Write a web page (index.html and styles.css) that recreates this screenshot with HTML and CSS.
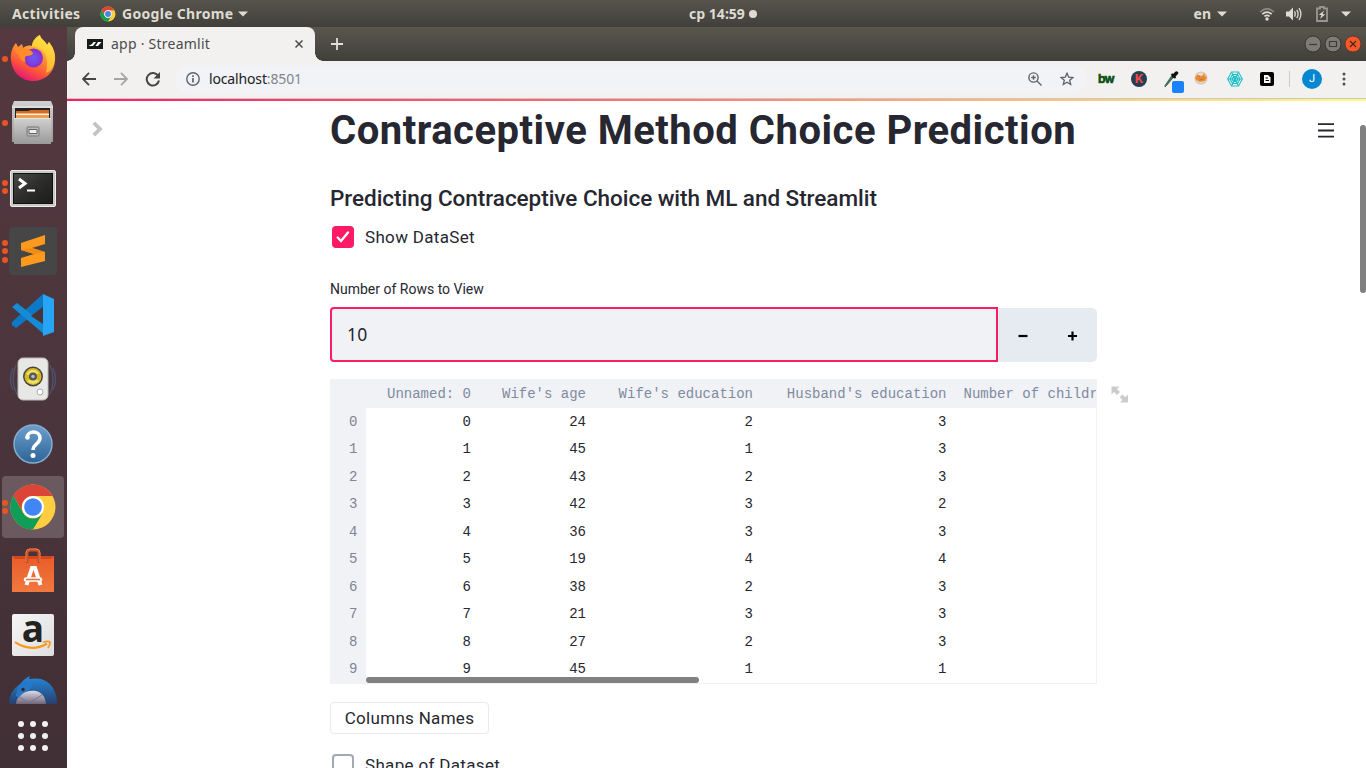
FILE: index.html
```html
<!DOCTYPE html>
<html lang="en">
<head>
<meta charset="utf-8">
<title>app · Streamlit</title>
<link rel="stylesheet" href="styles.css">
</head>
<body>
<svg width="0" height="0" class="defs">
  <defs>
    <linearGradient id="fox" x1="0.8" y1="0" x2="0.3" y2="1"><stop offset="0" stop-color="#fff44f"/><stop offset=".35" stop-color="#ffa436"/><stop offset=".7" stop-color="#ff5a36"/><stop offset="1" stop-color="#e3127a"/></linearGradient>
    <radialGradient id="globe"><stop offset="0" stop-color="#6a5cf5"/><stop offset="1" stop-color="#8a2fc9"/></radialGradient>
    <linearGradient id="metal" x1="0" y1="0" x2="0" y2="1"><stop offset="0" stop-color="#d0d0d0"/><stop offset="1" stop-color="#9a9a9a"/></linearGradient>
    <linearGradient id="term" x1="0" y1="0" x2="1" y2="1"><stop offset="0" stop-color="#4a4a48"/><stop offset=".5" stop-color="#2c2c2b"/><stop offset="1" stop-color="#1c1c1c"/></linearGradient>
    <linearGradient id="blue" x1="0" y1="0" x2="0" y2="1"><stop offset="0" stop-color="#6c9fce"/><stop offset="1" stop-color="#2d6496"/></linearGradient>
    <linearGradient id="bag" x1="0" y1="0" x2="0" y2="1"><stop offset="0" stop-color="#e95c2a"/><stop offset="1" stop-color="#f0783e"/></linearGradient>
    <linearGradient id="bird" x1="0" y1="0" x2="0" y2="1"><stop offset="0" stop-color="#2489dc"/><stop offset="1" stop-color="#27406f"/></linearGradient>
    <linearGradient id="paper" x1="0" y1="0" x2="0" y2="1"><stop offset="0" stop-color="#dcdcea"/><stop offset="1" stop-color="#6f6577"/></linearGradient>
    <symbol id="chrome" viewBox="0 0 48 48">
      <circle cx="24" cy="24" r="22.500" fill="#ffcd40"/>
      <path d="M4.500 12.700A22.500 22.500 0 0 1 43.500 13H24A11.5 11.5 0 0 0 14 29.8Z" fill="#db4437"/>
      <path d="M4.500 12.700A22.500 22.500 0 0 0 24 46.500L34 29.8A11.5 11.5 0 0 1 14 29.8Z" fill="#0f9d58"/>
      <circle cx="24" cy="24" r="11" fill="#fff"/><circle cx="24" cy="24" r="8.8" fill="#4285f4"/>
    </symbol>
  </defs>
</svg>

<header class="topbar">
  <span class="top-activities">Activities</span>
  <svg class="top-chrome" width="16" height="16"><use href="#chrome"/></svg>
  <span class="top-app">Google Chrome</span>
  <svg width="10" height="6" viewBox="0 0 10 6"><path d="M0 .5h10L5 5.5z" fill="#dfdbd2"/></svg>
  <div class="clock"><span>ср 14:59</span><i></i></div>
  <div class="tray">
    <span>en</span>
    <svg class="caret" width="10" height="6" viewBox="0 0 10 6"><path d="M0 .5h10L5 5.5z" fill="#dfdbd2"/></svg>
    <svg class="wifi" width="16" height="14" viewBox="0 0 16 14" fill="none" stroke-width="1.7"><path d="M1.200 5Q8-1.500 14.800 5" stroke="#8a8880"/><path d="M3.300 7.200Q8 2.900 12.700 7.200" stroke="#dfdbd2"/><path d="M5.400 9.400Q8 7.200 10.600 9.400" stroke="#dfdbd2"/><circle cx="8" cy="12" r="1.700" fill="#dfdbd2"/></svg>
    <svg class="volume" width="16" height="14" viewBox="0 0 16 14"><path d="M0 4.500h3L7 .5v13l-4-4H0z" fill="#dfdbd2"/><path d="M8.500 4.400q1.500 2.600 0 5.200M10.800 2.800q2.600 4.200 0 8.400M13 1.200q3.800 5.800 0 11.600" fill="none" stroke="#dfdbd2" stroke-width="1.300"/></svg>
    <svg class="battery" width="12" height="16" viewBox="0 0 12 16"><path d="M1 2.500h3V1h4v1.500h3V15H1z" fill="none" stroke="#99968f" stroke-width="1.800"/><path d="M8 4.500 2.800 9h2.700L4 13l5.200-4.800H6.500z" fill="#dfdbd2"/></svg>
    <svg width="10" height="6" viewBox="0 0 10 6"><path d="M0 .5h10L5 5.500z" fill="#dfdbd2"/></svg>
  </div>
</header>

<div class="desktop">
  <nav class="dock">
    <div class="app"><div class="dots"><i></i></div>
      <svg width="48" height="48" viewBox="0 0 48 48"><path d="M2 25C1 18 4 11 7 8l2 4 4-3 1 4c2-2 6-3 9-2C23 6 27 2 31 0c1 5 5 5 7 10l2-3c4 5 7 11 6 19-1 12-10 20-22 20S3 37 2 25Z" fill="url(#fox)"/><path d="M31 0c1 5 5 5 7 10l2-3c5 7 7 14 5 22-2 6-5 8-8 9 3-14 0-22-8-25-2-1-4-2-6-1 0-6 4-10 8-12Z" fill="#ffdf3b" opacity=".65"/><circle cx="24.500" cy="23" r="9.500" fill="url(#globe)"/><path d="M5 12l4 1 4-2 2 3c4-1 7 1 9 4 0 2-3 3-7 3-2 2-1 4 0 6-5-1-7-4-7-7-4-2-5-5-5-8Z" fill="#ff8b2a"/></svg>
    </div>
    <div class="app"><div class="dots"><i></i></div>
      <svg width="48" height="48" viewBox="0 0 48 48"><path d="M5 2h37l2 5v36H3V7z" fill="url(#metal)"/><path d="M3 7h41v2H3z" fill="#dedede"/><path d="M6 9h35v10H6z" fill="#222"/><path d="M7 12h12l3-1h18v9H7z" fill="#d66a25"/><path d="M7 14.500h33v1.500H7z" fill="#fff3dd"/><path d="M7 16h33v4H7z" fill="#eda04a"/><path d="M5 19h37v26H5z" fill="url(#metal)"/><path d="M5 19h37v1H5z" fill="#e5e5e5"/><rect x="18" y="28" width="12" height="9" rx="1.500" fill="#bbb" stroke="#8c8c8c" stroke-width="1.500"/><path d="M20 30.500h8v4h-8z" fill="#eee" stroke="#666" stroke-width="1"/></svg>
    </div>
    <div class="app"><div class="dots"><i></i><i></i></div>
      <svg width="48" height="48" viewBox="0 0 48 48"><rect x="1.500" y="7.500" width="45" height="36" rx="1.500" fill="#c9cac6" stroke="#ecece9" stroke-width="1"/><rect x="4.500" y="10.500" width="39" height="30" fill="url(#term)" stroke="#111" stroke-width="1"/><path d="M10 16l6 4.500-6 4.500" fill="none" stroke="#fff" stroke-width="3"/><path d="M18 27.500h8" stroke="#fff" stroke-width="2"/></svg>
    </div>
    <div class="app"><div class="dots"><i></i><i></i><i></i></div>
      <svg width="48" height="48" viewBox="0 0 48 48"><rect width="48" height="48" rx="4" fill="#464646"/><path d="M12 16 36 8v9l-13 4 13 4v9l-24 6v-9l13-4-13-4z" fill="#ff9a1f"/><path d="M12 23l13 4 11-2-13-4z" fill="#f28c12"/></svg>
    </div>
    <div class="app"><div class="dots"></div>
      <svg width="48" height="48" viewBox="0 0 48 48"><path d="M34 3 3 31v3l4 3 27-21z" fill="#0d78c6"/><path d="M3 16l5-4 28 22v10z" fill="#168bd6"/><path d="M34 3l11 5v33l-11 4z" fill="#27a4f3"/><path d="M34 16v17L22 25z" fill="#49343a"/></svg>
    </div>
    <div class="app"><div class="dots"></div>
      <svg width="48" height="48" viewBox="0 0 48 48"><g fill="none" stroke="#4c506b" stroke-width="1.500"><path d="M7 10q-6 15 1 29M4 13q-5 12 0 22M41 10q6 15 0 29M44 13q5 12 0 22"/></g><rect x="9" y="3" width="30" height="42" rx="5" fill="#e7e8e5" stroke="#bbb"/><circle cx="24" cy="21.500" r="10" fill="#444"/><circle cx="24" cy="21.500" r="8.500" fill="#d6b71c"/><path d="M17 19q7-8 13-1l-6 4zM18 26q6 6 12 0l-6-4z" fill="#eee168"/><circle cx="24" cy="21.500" r="4" fill="#555"/><circle cx="24" cy="21.500" r="1.800" fill="#bbb"/><circle cx="31" cy="37" r="3" fill="#fff" stroke="#aaa"/></svg>
    </div>
    <div class="app"><div class="dots"></div>
      <svg width="48" height="48" viewBox="0 0 48 48"><circle cx="24" cy="25" r="19" fill="url(#blue)" stroke="#85aed2" stroke-width="1.500"/><path d="M18 19c0-8 13-8 13 0 0 6-7 6-7 12" fill="none" stroke="#fff" stroke-width="3.500"/><circle cx="18.500" cy="18.500" r="2.300" fill="#fff"/><circle cx="24" cy="36.500" r="2.500" fill="#fff"/></svg>
    </div>
    <div class="app active"><div class="dots"><i></i><i></i></div>
      <svg width="48" height="48" viewBox="0 0 48 48"><use href="#chrome"/></svg>
    </div>
    <div class="app"><div class="dots"></div>
      <svg width="48" height="48" viewBox="0 0 48 48"><path d="M3 9h42v36H3z" fill="url(#bag)"/><path d="M3 9h42l-3 3H6z" fill="#cf491d"/><path d="M18 16V6q0-3 3-3h6q3 0 3 3v10" fill="none" stroke="#cb5025" stroke-width="3"/><path d="M17 15V6q0-4 4-4h6q4 0 4 4v9" fill="none" stroke="#ee7b4b" stroke-width="1"/><path d="M17.500 38 23 21h3l5.500 17" fill="none" stroke="#fff" stroke-width="4"/><path d="M17 32.500h14" stroke="#fff" stroke-width="4.500" stroke-linecap="round"/><path d="M17 32.500h14" stroke="#ed713b" stroke-width="1.600"/></svg>
    </div>
    <div class="app"><div class="dots"></div>
      <div class="amazon"><span>a</span><svg width="38" height="10" viewBox="0 0 38 10"><path d="M1 2.200q16 10.500 32 1.500" fill="none" stroke="#f79a1c" stroke-width="2.200"/><path d="M29 2.500q5-2 7-.5.500 2-2 6" fill="none" stroke="#f79a1c" stroke-width="1.700"/></svg></div>
    </div>
    <div class="app bird"><div class="dots"></div>
      <svg width="48" height="28" viewBox="0 0 48 28"><path d="M0 28Q0 15 11 8q5-6 10-8l-1 3q17-3 24 9 4 7 4 16z" fill="url(#bird)"/><path d="M7 28c0-8 10-15 20-13 7 2 9 6 10 13z" fill="url(#paper)"/><path d="M7 19 20 27 33 19" fill="none" stroke="#777593"/><path d="M9 10q8-6 15-3-1 7-9 9l-6 6-2-3z" fill="#2478ca"/><circle cx="14" cy="13.500" r="1.700" fill="#3b2525"/></svg>
    </div>
    <svg class="grid" width="30" height="30" viewBox="0 0 30 30" fill="#f3f1ef"><circle cx="3" cy="3" r="3"/><circle cx="15" cy="3" r="3"/><circle cx="27" cy="3" r="3"/><circle cx="3" cy="15" r="3"/><circle cx="15" cy="15" r="3"/><circle cx="27" cy="15" r="3"/><circle cx="3" cy="27" r="3"/><circle cx="15" cy="27" r="3"/><circle cx="27" cy="27" r="3"/></svg>
  </nav>

  <section class="browser">
    <div class="tabstrip">
      <div class="tab">
        <svg width="16" height="10" viewBox="0 0 16 10"><path d="M0 0h16v10H0z" fill="#171c1b"/><path d="M1.500 7h4.500l3-4H6.500L5 5zM8.500 7H11l3.500-4H11z" fill="#fff"/></svg>
        <span class="tab-title">app · Streamlit</span>
        <svg width="8" height="8" viewBox="0 0 8 8"><path d="M.5.5l7 7m0-7-7 7" stroke="#4b4b4b" stroke-width="1.500"/></svg>
      </div>
      <svg class="newtab" width="12" height="12" viewBox="0 0 12 12"><path d="M6 0v12M0 6h12" stroke="#e2dfd9" stroke-width="1.800"/></svg>
      <div class="winbtns"><svg width="58" height="18" viewBox="0 0 58 18"><circle cx="9" cy="9" r="8" fill="#7d7b73" stroke="#37362f"/><path d="M5 9.500h8" stroke="#3c3b35" stroke-width="1.200"/><circle cx="29" cy="9" r="8" fill="#7d7b73" stroke="#37362f"/><path d="M25.500 6.500h7v5h-7z" fill="none" stroke="#3c3b35" stroke-width="1.200"/><circle cx="49" cy="9" r="8" fill="#f4592a" stroke="#6b3724"/><path d="M46 6l6 6m0-6-6 6" stroke="#4b2413" stroke-width="1.200"/></svg></div>
    </div>
    <div class="toolbar">
      <svg width="14" height="14" viewBox="0 0 14 14" fill="none" stroke="#454545" stroke-width="1.800"><path d="M14 7H1.500M7 .8.900 7 7 13.200"/></svg>
      <svg width="14" height="14" viewBox="0 0 14 14" fill="none" stroke="#a5a5a5" stroke-width="1.800"><path d="M0 7h12.500M7 .8 13.100 7 7 13.200"/></svg>
      <svg width="16" height="16" viewBox="0 0 16 16"><path d="M13.200 5A6.200 6.200 0 1 0 14 9.500" fill="none" stroke="#454545" stroke-width="2"/><path d="M15 1v6.500H8.500z" fill="#454545"/></svg>
      <div class="omnibox">
        <svg width="14" height="14" viewBox="0 0 14 14"><circle cx="7" cy="7" r="6.200" fill="none" stroke="#5f6368" stroke-width="1.400"/><path d="M7 6v4.500M7 3.300v1.600" stroke="#5f6368" stroke-width="1.700"/></svg>
        <span class="url">localhost<em>:8501</em></span>
        <svg class="zoom" width="14" height="14" viewBox="0 0 14 14" fill="none" stroke="#606367" stroke-width="1.400"><circle cx="5.500" cy="5.500" r="4.600"/><path d="M9 9l4.500 4.500M3.200 5.500h4.600M5.500 3.200v4.600"/></svg>
        <svg class="star" width="14" height="14" viewBox="0 0 14 14"><path d="M7 1.200 8.700 5.100l4.200.4-3.200 2.800 1 4.200L7 10.300l-3.700 2.200 1-4.200L1.100 5.500l4.200-.4z" fill="none" stroke="#5f6368" stroke-width="1.300"/></svg>
      </div>
      <div class="exts">
        <b class="bw">bw</b>
        <b class="kk">K</b>
        <svg class="dropper" width="20" height="22" viewBox="0 0 20 22"><path d="M1 14.500 7.500 5l1.800 1.500L3 14l-2 2z" fill="#3b8054" stroke="#354a40" stroke-width=".7"/><path d="M7.500 3l4 4" stroke="#111" stroke-width="2"/><path d="M9.500 5 12.500 2" stroke="#111" stroke-width="3.500" stroke-linecap="round"/><rect x="8" y="10" width="12" height="12" rx="2" fill="#1a83fa"/></svg>
        <svg width="14" height="14" viewBox="0 0 14 14"><circle cx="7" cy="7" r="5.800" fill="#e8e1da" stroke="#d8c8b8" stroke-width="1.500"/><path d="M1 6l3-2 4 1 2-3 1 3 2 1-2 4-5 1-4-2z" fill="#f08a2c"/><path d="M3 4l3 2M5 9l5-1" stroke="#b97642"/></svg>
        <svg width="16" height="16" viewBox="0 0 16 16" fill="none" stroke="#1fbfc9" stroke-width="1.100"><path d="M4.500 1h7L15.300 8l-3.800 7h-7L.7 8z"/><path d="M5.500 3.500h5L13 8l-2.500 4.500h-5L3 8zM6.500 5.500h3L11 8l-1.500 2.500h-3L5 8zM1 8h14M4.500 1l7 14M11.500 1l-7 14"/></svg>
        <svg width="14" height="14" viewBox="0 0 14 14"><rect width="14" height="14" rx="2" fill="#000"/><path d="M4 3h4l2.500 2.500V11H4z" fill="#fff"/><path d="M5.500 6H8M5.500 8.500H9" stroke="#000"/></svg>
        <i class="sep"></i>
        <span class="avatar">J</span>
        <svg class="more" width="4" height="14" viewBox="0 0 4 14" fill="#505050"><circle cx="2" cy="2" r="1.500"/><circle cx="2" cy="7" r="1.500"/><circle cx="2" cy="12" r="1.500"/></svg>
      </div>
    </div>
    <div class="rainbow"></div>
    <main class="page">
      <aside class="left"><svg width="11" height="16" viewBox="0 0 11 16"><path d="M1.800 1.800 8 8l-6.200 6.200" fill="none" stroke="#c3c4c7" stroke-width="3.800"/></svg></aside>
      <div class="content">
        <h1><span>Contraceptive Method Choice Prediction</span></h1>
        <h3><span>Predicting Contraceptive Choice with ML and Streamlit</span></h3>
        <label class="check"><span class="box on"><svg width="14" height="12" viewBox="0 0 14 12"><path d="M1.700 6.500 5 10 12 1.500" fill="none" stroke="#fff" stroke-width="2.300" stroke-linecap="round"/></svg></span><span class="check-text">Show DataSet</span></label>
        <div class="numlabel"><span>Number of Rows to View</span></div>
        <div class="number"><div class="field">10</div><div class="steps"><svg width="50" height="54" viewBox="0 0 50 54"><path d="M20.500 28h9" stroke="#000" stroke-width="2.200"/></svg><svg width="49" height="54" viewBox="0 0 49 54"><path d="M20 28h9M24.500 23.500v9" stroke="#000" stroke-width="2.200"/></svg></div></div>
        <div class="frame">
          <div class="table">
            <div class="row head"><span></span><span>Unnamed: 0</span><span>Wife's age</span><span>Wife's education</span><span>Husband's education</span><span class="last">Number of children</span></div>
            <div class="row"><span>0</span><span>0</span><span>24</span><span>2</span><span>3</span></div>
            <div class="row"><span>1</span><span>1</span><span>45</span><span>1</span><span>3</span></div>
            <div class="row"><span>2</span><span>2</span><span>43</span><span>2</span><span>3</span></div>
            <div class="row"><span>3</span><span>3</span><span>42</span><span>3</span><span>2</span></div>
            <div class="row"><span>4</span><span>4</span><span>36</span><span>3</span><span>3</span></div>
            <div class="row"><span>5</span><span>5</span><span>19</span><span>4</span><span>4</span></div>
            <div class="row"><span>6</span><span>6</span><span>38</span><span>2</span><span>3</span></div>
            <div class="row"><span>7</span><span>7</span><span>21</span><span>3</span><span>3</span></div>
            <div class="row"><span>8</span><span>8</span><span>27</span><span>2</span><span>3</span></div>
            <div class="row"><span>9</span><span>9</span><span>45</span><span>1</span><span>1</span></div>
            <i class="hscroll"></i>
          </div>
          <svg class="expand" width="18" height="17" viewBox="0 0 18 17"><path d="M.5.500h8L6 3l3 3-3 3-3-3L.500 8.500zM17 16.500H9L11.500 14 8.700 11.200l2.700-2.700 2.800 2.800L17 8.500z" fill="#cacbcd"/></svg>
        </div>
        <button class="btn"><span>Columns Names</span></button>
        <label class="check second"><span class="box"></span><span class="check-text">Shape of Dataset</span></label>
      </div>
      <svg class="menu" width="16" height="15" viewBox="0 0 16 15"><path d="M0 1.200h16M0 7.500h16M0 13.600h16" stroke="#262730" stroke-width="1.800"/></svg>
      <i class="vscroll"></i>
    </main>
  </section>
</div>
</body>
</html>
```
FILE: styles.css
```css
* { box-sizing: border-box; }
body { margin: 0; width: 1366px; height: 768px; overflow: hidden; display: flex; flex-direction: column; font-family: "Noto Sans", sans-serif; background: #fff; }
svg { display: block; flex: none; }
i, em { font-style: normal; }
span { white-space: nowrap; }
.defs { position: absolute; }

.topbar { height: 27px; flex: none; display: flex; align-items: center; padding: 0 15px 0 12px; background: linear-gradient(#57544c, #403f3a); color: #dfdbd2; font-size: 14px; font-weight: 700; line-height: 27px; position: relative; }
.top-activities { width: 88px; letter-spacing: .35px; }
.top-app { margin: 0 5px 0 6px; width: 111px; letter-spacing: .3px; }
.clock { position: absolute; left: 689px; top: 0; display: flex; align-items: center; gap: 4px; letter-spacing: 0; }
.clock i { width: 8px; height: 8px; border-radius: 50%; background: #dfdbd2; }
.tray { margin-left: auto; display: flex; align-items: center; }
.caret { margin: 0 32px 0 6px; }
.wifi { margin-right: 11px; }
.volume { margin-right: 14px; }
.battery { margin-right: 13px; }

.desktop { flex: 1; display: flex; min-height: 0; }
.dock { width: 67px; flex: none; display: flex; flex-direction: column; background: linear-gradient(#553840, #49343b 60%, #402f35); gap: 2px; padding-top: 1px; }
.app { height: 62px; flex: none; width: 62px; margin-left: 2px; display: flex; align-items: center; border-radius: 4px; }
.app.active { background: #6b5960; }
.dots { width: 7px; display: flex; flex-direction: column; gap: 2.500px; align-items: center; margin-left: -1px; margin-right: 1px; }
.dots i { width: 6px; height: 6px; border-radius: 50%; background: #e95420; }
.app.bird { height: 28px; margin-top: 8px; }
.amazon { width: 42px; height: 42px; margin-left: 3px; border-radius: 2px; background: linear-gradient(135deg, #f5f5f5, #dedede); display: flex; flex-direction: column; align-items: center; font: 700 37px/28px "Open Sans", sans-serif; color: #222; }
.amazon span { height: 26px; }
.grid { margin: 15px 0 0 18px; }

.browser { flex: 1; min-width: 0; display: flex; flex-direction: column; }
.tabstrip { height: 34px; flex: none; background: linear-gradient(#5a574f, #403f3a); display: flex; align-items: center; padding-left: 8px; }
.tab { width: 240px; height: 34px; background: #f2f1f0; border-radius: 8px 8px 0 0; display: flex; align-items: center; padding: 0 12px; position: relative; }
.tab::before, .tab::after { content: ""; position: absolute; bottom: 0; width: 8px; height: 8px; }
.tab::before { left: -8px; background: radial-gradient(circle at 0 0, transparent 7.500px, #f2f1f0 8px); }
.tab::after { right: -8px; background: radial-gradient(circle at 100% 0, transparent 7.500px, #f2f1f0 8px); }
.tab-title { flex: 1; margin-left: 8px; font-size: 14px; line-height: 20px; letter-spacing: .24px; color: #4b4b4b; }
.newtab { margin-left: 16px; }
.winbtns { margin-left: auto; margin-right: 4px; }
.toolbar { height: 38px; flex: none; background: #f2f1f0; border-bottom: 1px solid #c8c8c8; display: flex; align-items: center; padding: 0 20px 1px 15px; }
.toolbar > svg { margin-right: 18px; }
.toolbar > svg:nth-of-type(3) { margin-right: 14px; margin-left: -1px; }
.omnibox { flex: 1; height: 28px; border-radius: 14px; background: #f1f3f6; display: flex; align-items: center; padding: 0 12px 0 11px; }
.url { margin-left: 9px; flex: 1; font-size: 14px; line-height: 20px; letter-spacing: -.15px; color: #202124; }
.url em { color: #80868b; }
.zoom { margin-right: 18px; }
.exts { display: flex; align-items: center; margin-left: 13px; }
.bw { width: 16px; margin-left: -1px; margin-right: 1px; font: 700 12px/14px "Inter", sans-serif; letter-spacing: -1px; color: #0b4f12; -webkit-text-stroke: .5px #0b4f12; }
.kk { width: 16px; height: 16px; margin-left: 16px; border-radius: 50%; background: #263e4f; color: #f0484e; font: 700 13px/16px "Roboto", sans-serif; text-align: center; }
.dropper { margin: 6px 10px 0 17px; }
.exts > svg:nth-of-type(2) { margin-right: 19px; margin-bottom: 2px; }
.exts > svg:nth-of-type(4) { margin-left: 17px; }
.sep { width: 1px; height: 16px; background: #c9c9c9; margin: 0 12px 0 15px; }
.avatar { width: 20px; height: 20px; border-radius: 50%; background: #0288d1; color: #fff; font: 11px/20px "Roboto", sans-serif; text-align: center; }
.more { margin-left: 20px; }
.rainbow { height: 2px; flex: none; background: linear-gradient(90deg, #ff1a66, #ff6a70 40%, #fffd80); }

.page { flex: 1; min-height: 0; background: #fff; display: flex; position: relative; overflow: hidden; color: #262730; font-family: "Roboto", sans-serif; }
.left { width: 263px; flex: none; padding: 20px 0 0 25px; }
.content { width: 767px; display: flex; flex-direction: column; align-items: flex-start; }
.content > * { flex-shrink: 0; }
h1 { margin: 5px 0 0; font-size: 40px; line-height: 50px; height: 50px; font-weight: 700; letter-spacing: .5px; }
h3 { margin: 27px 0 0; font-size: 22.500px; line-height: 30px; height: 30px; font-weight: 500; letter-spacing: -.04px; }
.check { display: flex; align-items: center; margin: 12px 0 0 2px; height: 24px; font-size: 17px; gap: 11px; }
.check-text { letter-spacing: .33px; margin-top: -1px; }
.box { width: 22px; height: 22px; border-radius: 4px; border: 2px solid #a3a8b4; display: flex; align-items: center; justify-content: center; }
.box.on { background: #ff1a66; border: 0; }
.numlabel { margin-top: 29px; height: 22px; font-size: 14px; line-height: 22px; }
.number { margin-top: 7px; display: flex; width: 767px; height: 55px; }
.field { width: 668px; height: 55px; border: 2px solid #f91d63; border-radius: 4px 0 0 4px; background: #f0f2f6; padding-left: 15px; font: 17.500px/51px "Noto Sans", sans-serif; letter-spacing: .3px; }
.steps { flex: 1; display: flex; height: 54px; margin-top: 1px; background: #e6eaf1; border-radius: 0 5px 5px 0; }
.frame { display: flex; margin-top: 17px; gap: 14px; }
.table { width: 767px; height: 305px; overflow: hidden; position: relative; border: solid #f0f2f6; border-width: 0 1px 1px 0; background: linear-gradient(90deg, #f0f2f6 36px, #fff 36px); font: 14px/29.450px "Liberation Mono", monospace; }
.row { display: grid; grid-template-columns: 36px 113.500px 115px 167px 193.500px 250px; height: 27.450px; }
.row span { text-align: right; padding-right: 8.500px; }
.row span:first-child { color: #808495; }
.row.head { height: 29px; line-height: 31px; color: #808aa0; background: #f0f2f6; }
.row .last { text-align: left; padding-left: 8.500px; }
.hscroll { position: absolute; left: 36px; bottom: 0; width: 333px; height: 6px; border-radius: 3px; background: #808080; }
.expand { margin-top: 7px; }
.btn { margin-top: 18px; height: 32px; width: 159px; padding: 0; border: 1px solid #e6eaf1; border-radius: 4px; background: #fff; color: #262730; font: 17px/30px "Roboto", sans-serif; letter-spacing: .3px; }
.second { margin-top: 19px; }
.menu { position: absolute; right: 32px; top: 22px; }
.vscroll { position: absolute; right: 0; top: 24px; width: 6px; height: 168px; border-radius: 3px; background: #808080; }
```
